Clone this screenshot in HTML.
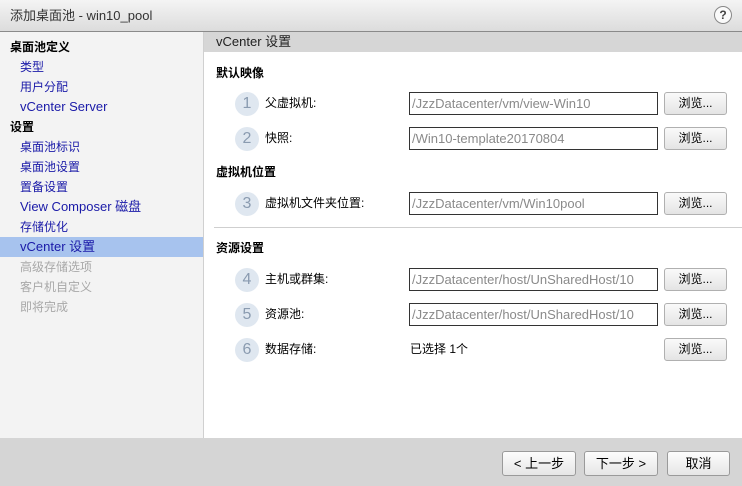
<!DOCTYPE html>
<html><head><meta charset="utf-8"><style>
*{margin:0;padding:0;box-sizing:border-box}
body{width:742px;height:486px;position:relative;overflow:hidden;background:#fff;font-family:"Liberation Sans","Noto Sans CJK SC",sans-serif;font-size:12px;color:#000}
.a{position:absolute;white-space:nowrap;line-height:16px}
#title{left:0;top:0;width:742px;height:32px;background:linear-gradient(#f4f4f4,#dcdcdc);border-bottom:1px solid #8a8a8a}
#left{left:0;top:32px;width:204px;height:406px;background:#f3f3f3;border-right:1px solid #d0d0d0}
.h{font-weight:bold;left:10px}
.l{left:20px;color:#1a1aa8}
.g{left:20px;color:#a8a8a8}
#rh{left:204px;top:32px;width:538px;height:20px;background:#d6d6d6}
.sec{font-weight:bold;left:216px}
.num{width:24px;height:24px;border-radius:12px;background:#dfe7f0;color:#8a9bb0;font-size:16px;text-align:center;line-height:24px;left:235px}
.lab{left:265px}
.in{left:409px;width:249px;height:23px;border:1px solid #333;color:#8a8a8a;padding:3px 2px;font-size:13px;overflow:hidden}
.bt{left:664px;width:63px;height:23px;border:1px solid #b0b0b0;border-radius:3px;background:linear-gradient(#fafafa,#e4e4e4);text-align:center;line-height:21px}
#foot{left:0;top:438px;width:742px;height:48px;background:#d5d5d5}
.fb{top:451px;height:25px;border:1px solid #9a9a9a;border-radius:3px;background:linear-gradient(#fdfdfd,#e6e6e6);text-align:center;line-height:23px;font-size:13px}
</style></head><body>
<div class="a" id="title"></div>
<div class="a" style="left:10px;top:8px;font-size:13px;color:#333">添加桌面池 - win10_pool</div>
<div class="a" style="left:714px;top:6px;width:18px;height:18px;border-radius:9px;border:1px solid #888;background:#fafafa;text-align:center;font-weight:bold;font-size:12px;line-height:16px;color:#444">?</div>
<div class="a" id="left"></div>
<div class="a" style="left:0;top:237px;width:203px;height:20px;background:#a7c3ee"></div>
<div class="a h" style="top:39px">桌面池定义</div>
<div class="a l" style="top:59px">类型</div>
<div class="a l" style="top:79px">用户分配</div>
<div class="a l" style="top:99px;font-size:13px">vCenter Server</div>
<div class="a h" style="top:119px">设置</div>
<div class="a l" style="top:139px">桌面池标识</div>
<div class="a l" style="top:159px">桌面池设置</div>
<div class="a l" style="top:179px">置备设置</div>
<div class="a l" style="top:199px;font-size:13px">View Composer 磁盘</div>
<div class="a l" style="top:219px">存储优化</div>
<div class="a l" style="top:239px;font-size:13px">vCenter 设置</div>
<div class="a g" style="top:259px">高级存储选项</div>
<div class="a g" style="top:279px">客户机自定义</div>
<div class="a g" style="top:299px">即将完成</div>
<div class="a" id="rh"></div>
<div class="a" style="left:216px;top:34px;font-size:13px;color:#222">vCenter 设置</div>
<div class="a sec" style="top:65px">默认映像</div>
<div class="a num" style="top:92px">1</div><div class="a lab" style="top:95px">父虚拟机:</div>
<div class="a in" style="top:92px">/JzzDatacenter/vm/view-Win10</div><div class="a bt" style="top:92px">浏览...</div>
<div class="a num" style="top:127px">2</div><div class="a lab" style="top:130px">快照:</div>
<div class="a in" style="top:127px">/Win10-template20170804</div><div class="a bt" style="top:127px">浏览...</div>
<div class="a sec" style="top:164px">虚拟机位置</div>
<div class="a num" style="top:192px">3</div><div class="a lab" style="top:195px">虚拟机文件夹位置:</div>
<div class="a in" style="top:192px">/JzzDatacenter/vm/Win10pool</div><div class="a bt" style="top:192px">浏览...</div>
<div class="a" style="left:214px;top:227px;width:528px;height:1px;background:#cfcfcf"></div>
<div class="a sec" style="top:240px">资源设置</div>
<div class="a num" style="top:268px">4</div><div class="a lab" style="top:271px">主机或群集:</div>
<div class="a in" style="top:268px">/JzzDatacenter/host/UnSharedHost/10</div><div class="a bt" style="top:268px">浏览...</div>
<div class="a num" style="top:303px">5</div><div class="a lab" style="top:306px">资源池:</div>
<div class="a in" style="top:303px">/JzzDatacenter/host/UnSharedHost/10</div><div class="a bt" style="top:303px">浏览...</div>
<div class="a num" style="top:338px">6</div><div class="a lab" style="top:341px">数据存储:</div>
<div class="a" style="left:410px;top:341px">已选择 1个</div><div class="a bt" style="top:338px">浏览...</div>
<div class="a" id="foot"></div>
<div class="a fb" style="left:502px;width:74px">&lt; 上一步</div>
<div class="a fb" style="left:584px;width:74px">下一步 &gt;</div>
<div class="a fb" style="left:667px;width:63px">取消</div>
</body></html>
